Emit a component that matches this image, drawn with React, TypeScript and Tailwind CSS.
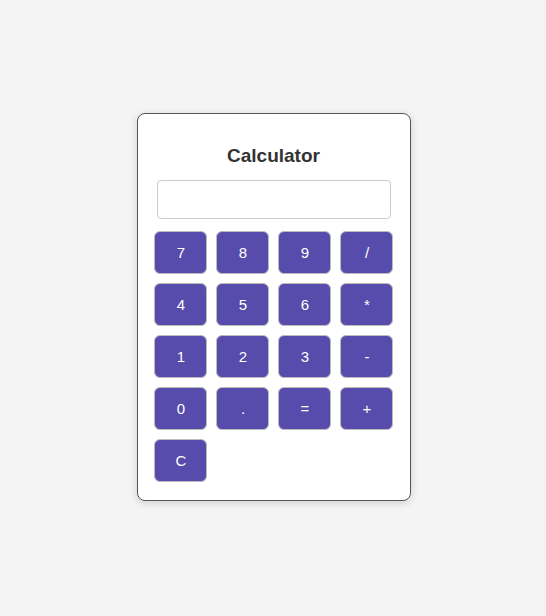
import React from "react";

const keys = ["7", "8", "9", "/", "4", "5", "6", "*", "1", "2", "3", "-", "0", ".", "=", "+", "C"];

export default function App() {
  return (
    <div className="min-h-screen w-full bg-[#f4f4f4] flex items-center justify-center font-['Liberation_Sans',Arial,sans-serif]">
      <div className="w-[274px] bg-white border border-[#555] rounded-[8px] shadow-[0_2px_8px_rgba(0,0,0,0.15)] pt-[31px] pb-[18px] pl-[16px] pr-[17px] mt-[-3px] ml-[2px]">
        <h2 className="text-[19px] leading-[22px] font-bold text-[#333] text-center">Calculator</h2>
        <div className="mt-[13px] pl-[3px] pr-[2px]">
          <div className="h-[39px] w-full border border-[#ccc] rounded-[4px] bg-white"></div>
        </div>
        <div className="mt-[12px] grid grid-cols-[repeat(4,53px)] gap-[9px]">
          {keys.map((k) => (
            <button
              key={k}
              className="h-[43px] pt-[2px] pl-[1px] bg-[#574bab] text-white text-[15px] border border-[#bbb] rounded-[6px] flex items-center justify-center"
            >
              {k}
            </button>
          ))}
        </div>
      </div>
    </div>
  );
}
